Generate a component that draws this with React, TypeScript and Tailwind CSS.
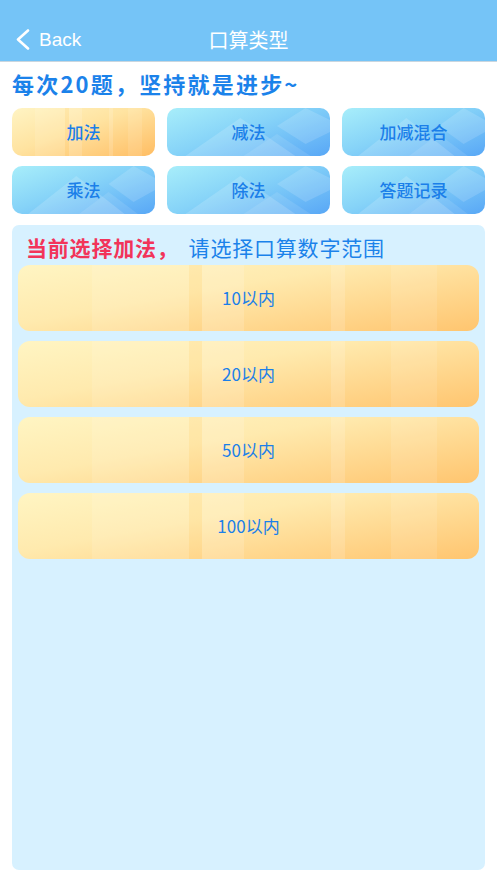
const font = { fontFamily: '"Noto Sans CJK SC", "Noto Sans", sans-serif' };

type Kind = "yellow" | "blue";

const TOP_BUTTONS: { label: string; kind: Kind }[] = [
  { label: "加法", kind: "yellow" },
  { label: "减法", kind: "blue" },
  { label: "加减混合", kind: "blue" },
  { label: "乘法", kind: "blue" },
  { label: "除法", kind: "blue" },
  { label: "答题记录", kind: "blue" },
];

const RANGES = ["10以内", "20以内", "50以内", "100以内"];

function Stripes() {
  // vertical light/dark bands seen on the yellow tiles
  return (
    <div className="absolute inset-0 flex pointer-events-none">
      <div className="w-[16%]" />
      <div className="w-[21%] bg-white/10" />
      <div className="w-[3%] bg-[#ffb64d]/10" />
      <div className="w-[9%] bg-white/15" />
      <div className="w-[19%]" />
      <div className="w-[3%] bg-white/15" />
      <div className="w-[10%]" />
      <div className="w-[10%] bg-white/10" />
      <div className="flex-1" />
    </div>
  );
}

function Mountains() {
  return (
    <svg className="absolute inset-0 h-full w-full pointer-events-none" viewBox="0 0 160 48" preserveAspectRatio="none">
      <polygon points="18,48 72,10 126,48" fill="#ffffff" opacity="0.16" />
      <polygon points="75,48 108,26 141,48" fill="#ffffff" opacity="0.1" />
      <polygon points="108,18 136,0 160,12 160,24 136,36" fill="#ffffff" opacity="0.14" />
    </svg>
  );
}

function Tile({ label, kind }: { label: string; kind: Kind }) {
  return (
    <div
      className={
        "relative h-12 rounded-[10px] overflow-hidden flex items-center justify-center " +
        (kind === "yellow"
          ? "bg-[linear-gradient(160deg,#fff4c4_0%,#ffe3a0_45%,#ffbd63_100%)]"
          : "bg-[linear-gradient(160deg,#a8eefa_0%,#86d3f8_45%,#58a7f6_100%)]")
      }
    >
      {kind === "yellow" ? <Stripes /> : <Mountains />}
      <span className="relative text-[17px] font-medium text-[#1b7fe9]">{label}</span>
    </div>
  );
}

export default function App() {
  return (
    <div className="w-[497px] h-[883px] bg-white flex flex-col" style={font}>
      <header className="h-[62px] shrink-0 bg-[#75c4f7] border-b border-[#c9d6df] flex flex-col">
        <div className="mt-auto h-[43px] relative flex items-center">
          <div className="flex items-center gap-[9px] pl-[15px] text-white">
            <svg width="15" height="21" viewBox="0 0 15 21" fill="none">
              <polyline points="13,1.5 3,10.5 13,19.5" stroke="white" strokeWidth="2.6" strokeLinecap="round" strokeLinejoin="round" />
            </svg>
            <span className="text-[19px] leading-none" style={{ fontFamily: '"Liberation Sans", sans-serif' }}>Back</span>
          </div>
          <div className="absolute inset-0 flex items-center justify-center text-white text-[20px] leading-none">口算类型</div>
        </div>
      </header>

      <h1 className="px-[12px] pt-[7px] text-[22px] tracking-[2.2px] font-bold text-[#1b82ea] leading-[28px]">每次20题，坚持就是进步~</h1>

      <div className="grid grid-cols-[143px_163px_143px] gap-x-[12px] gap-y-[10px] px-[12px] pt-[11px]">
        {TOP_BUTTONS.map((b) => (
          <Tile key={b.label} label={b.label} kind={b.kind} />
        ))}
      </div>

      <section className="mx-[12px] mt-[11px] mb-[13px] flex-1 rounded-[7px] bg-[#d7f1ff] px-[6px] pt-[7px] flex flex-col">
        <p className="pl-[8px] text-[21px] tracking-[0.8px] leading-[30px] whitespace-nowrap">
          <span className="font-bold text-[#f2345a]">当前选择加法，</span>
          <span className="ml-[10px] text-[#1b82ea]">请选择口算数字范围</span>
        </p>
        <div className="mt-[3px] flex flex-col gap-[10px]">
          {RANGES.map((r) => (
            <div
              key={r}
              className="relative h-[66px] rounded-[12px] overflow-hidden flex items-center justify-center bg-[linear-gradient(170deg,#fff5c3_0%,#ffeaae_40%,#ffc56f_100%)]"
            >
              <Stripes />
              <span className="relative text-[17px] text-[#1b7fe9]">{r}</span>
            </div>
          ))}
        </div>
      </section>
    </div>
  );
}
